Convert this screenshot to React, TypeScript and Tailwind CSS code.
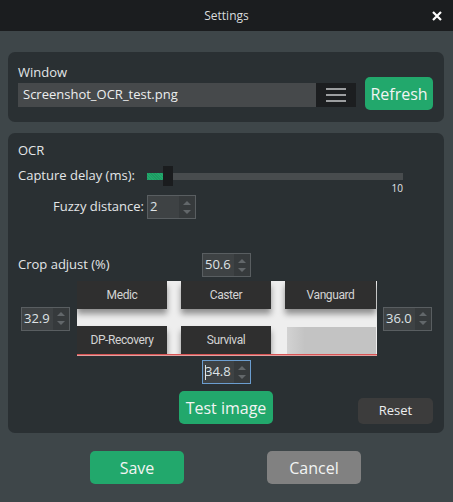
import React from 'react';

const font = { fontFamily: '"Open Sans", "Noto Sans", sans-serif' };

function SpinBox({ value, focused = false, className = '' }: { value: string; focused?: boolean; className?: string }) {
  return (
    <div
      className={`relative flex h-[24px] w-[49px] shrink-0 border ${
        focused ? 'border-[#6b9dcf]' : 'border-[#595e61]'
      } bg-[#3e4244] ${className}`}
    >
      <div className="flex flex-1 items-center pl-[2px] text-[13px] text-[#dfe3e6]">
        {focused && <span className="mr-[-1px] h-[15px] w-[1px] bg-[#dfe3e6]" />}
        {value}
      </div>
      <div className="flex w-[16px] flex-col items-center justify-center gap-[5px] bg-[#363a3c]">
        <svg width="8" height="4" viewBox="0 0 8 4">
          <path d="M0 4 L4 0 L8 4 Z" fill="#62676a" />
        </svg>
        <svg width="8" height="4" viewBox="0 0 8 4">
          <path d="M0 0 L4 4 L8 0 Z" fill="#62676a" />
        </svg>
      </div>
    </div>
  );
}

function Tile({ label }: { label: string }) {
  return (
    <div
      className="flex items-center justify-center bg-[#2f2f2f] text-[12px] tracking-[-0.4px] text-[#d4d4d4] shadow-[0_5px_6px_rgba(0,0,0,0.4)]"
      style={{ fontFamily: 'Roboto, "Liberation Sans", sans-serif' }}
    >
      {label}
    </div>
  );
}

export default function App() {
  return (
    <div className="flex h-[502px] w-[453px] flex-col bg-[#3e4649] text-[#e6e9eb]" style={font}>
      {/* title bar */}
      <div className="relative flex h-[31px] shrink-0 items-center justify-center bg-[#1b1d1f]">
        <span className="text-[12px] text-[#d9dcde]">Settings</span>
        <svg className="absolute right-[11px] top-[11px]" width="10" height="10" viewBox="0 0 10 10">
          <path d="M1 1 L9 9 M9 1 L1 9" stroke="#ffffff" strokeWidth="2.2" />
        </svg>
      </div>

      {/* Window group */}
      <div className="ml-[8px] mt-[21px] flex h-[70px] w-[436px] rounded-[7px] bg-[#2a3033] pl-[10px]">
        <div className="flex flex-col pt-[9px]">
          <div className="h-[22px] text-[13px] leading-[22px] text-[#e3e6e8]">Window</div>
          <div className="flex h-[24px] w-[338px]">
            <div className="flex flex-1 items-center bg-[#46494b] pl-[5px] text-[13px] text-[#eceeef]">
              Screenshot_OCR_test.png
            </div>
            <div className="flex w-[40px] flex-col items-center justify-center gap-[4px] bg-[#1c1e20]">
              <span className="h-[2px] w-[20px] bg-[#9c9ea0]" />
              <span className="h-[2px] w-[20px] bg-[#9c9ea0]" />
              <span className="h-[2px] w-[20px] bg-[#9c9ea0]" />
            </div>
          </div>
        </div>
        <button className="ml-[9px] mt-[25px] h-[33px] w-[68px] rounded-[5px] bg-[#22a86c] text-[16px] text-[#f2f4f3]">
          Refresh
        </button>
      </div>

      {/* OCR group */}
      <div className="ml-[8px] mt-[11px] flex h-[300px] w-[436px] flex-col rounded-[7px] bg-[#2a3033] pl-[10px]">
        <div className="mt-[7px] h-[20px] text-[13px] leading-[20px] text-[#e3e6e8]">OCR</div>

        {/* capture delay */}
        <div className="mt-[6px] flex h-[20px] items-center">
          <span className="w-[129px] text-[13px] text-[#e3e6e8]">Capture delay (ms):</span>
          <div className="relative flex h-[20px] w-[256px] items-center">
            <div className="h-[7px] w-[16px] bg-[#22a86c] bg-[repeating-linear-gradient(45deg,#22a86c_0px,#22a86c_1px,#1e9a62_1px,#1e9a62_2px)]" />
            <div className="h-[20px] w-[10px] bg-[#1a1c1e]" />
            <div className="h-[7px] flex-1 bg-[#484c4e]" />
          </div>
        </div>
        <div className="flex w-[385px] justify-end">
          <span className="mt-[-4px] text-[10px] leading-[12px] text-[#e3e6e8]">10</span>
        </div>

        {/* fuzzy distance */}
        <div className="mt-[1px] flex h-[24px] items-center">
          <span className="w-[126px] text-right text-[13px] text-[#e3e6e8]">Fuzzy distance:</span>
          <SpinBox value="2" className="ml-[3px]" />
        </div>

        {/* crop adjust */}
        <div className="mt-[34px] flex h-[24px] items-center">
          <span className="w-[184px] text-[13px] text-[#e3e6e8]">Crop adjust (%)</span>
          <SpinBox value="50.6" />
        </div>

        <div className="mt-[4px] flex h-[75px] items-center">
          <SpinBox value="32.9" className="ml-[3px]" />
          <div className="ml-[7px] flex h-[75px] w-[300px] flex-col overflow-hidden bg-[#eeeeee]">
            <div className="grid flex-1 grid-cols-[90px_90px_91px] grid-rows-[28px_28px] gap-x-[14px] gap-y-[17px] pr-[1px]">
              <Tile label="Medic" />
              <Tile label="Caster" />
              <Tile label="Vanguard" />
              <Tile label="DP-Recovery" />
              <Tile label="Survival" />
              <div className="ml-[2px] mt-[1px] bg-[#c6c6c6] bg-[linear-gradient(90deg,#d2d2d2,#c3c3c3_20%,#c3c3c3)]" />
            </div>
            <div className="h-[1px] bg-[#d85454]" />
            <div className="h-[1px] bg-[#e0a0a0]" />
          </div>
          <SpinBox value="36.0" className="ml-[6px]" />
        </div>

        <div className="mt-[4px] flex">
          <SpinBox value="34.8" focused className="ml-[184px]" />
        </div>

        {/* test / reset */}
        <div className="mt-[7px] flex h-[33px]">
          <button className="ml-[161px] h-[33px] w-[94px] rounded-[5px] bg-[#22a86c] text-[16px] text-[#f2f4f3]">
            Test image
          </button>
          <button className="ml-[85px] mt-[7px] h-[26px] w-[75px] rounded-[5px] bg-[#3c3c3c] text-[13px] text-[#eceeef]">
            Reset
          </button>
        </div>
      </div>

      {/* save / cancel */}
      <div className="mt-[18px] flex pl-[90px]">
        <button className="h-[33px] w-[94px] rounded-[5px] bg-[#22a86c] text-[16px] text-[#f2f4f3]">Save</button>
        <button className="ml-[83px] h-[33px] w-[94px] rounded-[5px] bg-[#818181] text-[16px] text-[#f2f4f3]">
          Cancel
        </button>
      </div>
    </div>
  );
}
